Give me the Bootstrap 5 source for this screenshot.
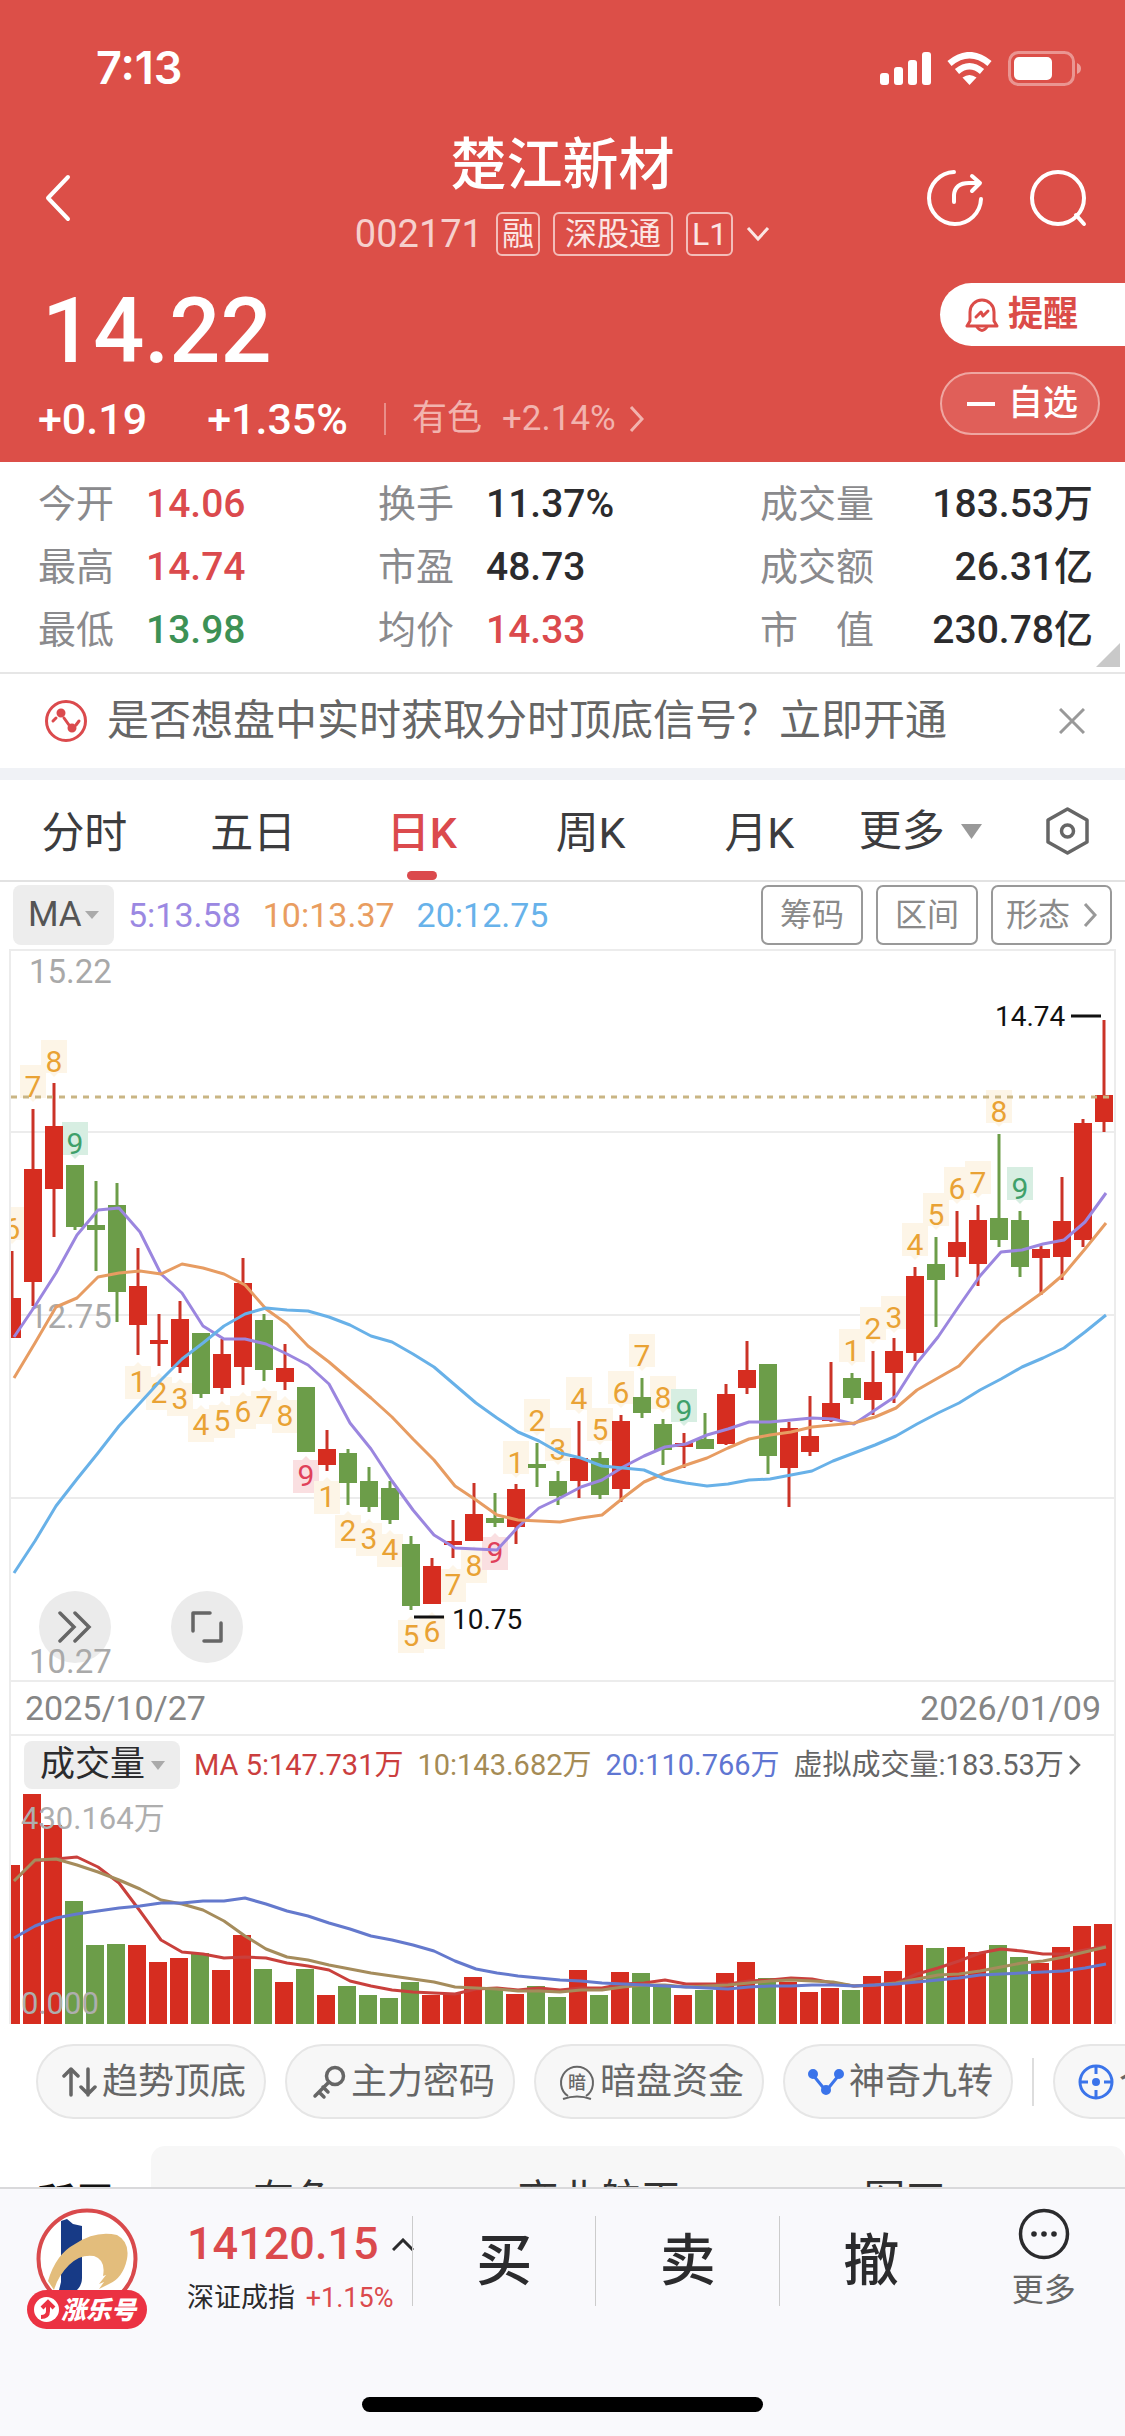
<!DOCTYPE html>
<html lang="zh-CN">
<head>
<meta charset="utf-8">
<meta name="viewport" content="width=device-width, initial-scale=1">
<title>楚江新材 002171</title>
<link href="https://cdn.jsdelivr.net/npm/bootstrap@5.3.0/dist/css/bootstrap.min.css" rel="stylesheet">
<style>
  :root { --up: #db4a4d; --down: #3d9155; --brand: #dc4f48; --rule: #e6e6e6; }
  body { font-family: Roboto, "Noto Sans CJK SC", sans-serif; background: #fff; color: #2b2b2d; }
  button, select { font-family: inherit; }
  svg { display: block; flex: none; }
  .plain { background: none; border: 0; padding: 0; color: inherit; }
  .up { color: var(--up); }
  .down { color: var(--down); }

  .page-main { min-height: 0; }
  .quote-head { background: var(--brand); color: #fff; }
  .status { padding: 43px 42px 40px 96px; font: 600 45px/50px Inter, sans-serif; }
  .status-icons { gap: 16px; }
  .side { flex: 1 1 0; padding: 0 38px; gap: 45px; }
  .back { margin-left: 7px; }
  .stock-name { font-size: 56px; line-height: 64px; font-weight: 500; margin: 0; }
  .stock-code { font-size: 38px; line-height: 58px; margin-top: 8px; gap: 13px; color: #f6d0cd; }
  .flag { border: 2px solid #f3bdb9; border-radius: 6px; font-size: 32px; line-height: 40px; padding: 0 4px; color: #fbe6e4; }
  .flag-wide { padding: 0 10px; }
  .price-area { padding: 20px 0 21px 38px; }
  .price { font-size: 90px; line-height: 98px; font-weight: 500; padding-left: 4px; }
  .change { font-size: 43px; line-height: 44px; font-weight: 500; margin-top: 16px; }
  .change-pct { padding-left: 60px; }
  .sector { font-size: 35px; font-weight: 400; color: #f2b3ae; border-left: 2px solid #e98e89; line-height: 32px; padding-left: 26px; margin-left: 36px; gap: 20px; text-decoration: none; }
  .sector svg { margin-left: -8px; }
  .tool { width: 185px; height: 63px; font-size: 35px; line-height: 60px; gap: 9px; font-weight: 500; }
  .tool-alert { background: #fff; color: #db4c48; border-radius: 32px 0 0 32px; padding-left: 25px; font-weight: 700; }
  .tool-fav { width: 160px; border: 2px solid #efa6a1; border-radius: 32px; background: #e05f59; padding-left: 25px; margin-top: 26px; gap: 13px; }

  .stats { display: grid; grid-template-columns: 340fr 382fr 333fr; padding: 11px 32px 10px 38px; border-bottom: 2px solid var(--rule); font-size: 39px; line-height: 63px; margin: 0; position: relative; }
  .stats dt { font-size: 38px; font-weight: 400; color: #8a8a8d; width: 108px; white-space: nowrap; flex: none; }
  .stats dd { margin: 0; font-weight: 500; white-space: nowrap; }
  .fold { position: absolute; right: 5px; bottom: 5px; }

  .notice { padding: 0 40px 0 45px; gap: 20px; font-size: 42px; line-height: 92px; color: #666; border-bottom: 12px solid #f0f2f6; height: 106px; }
  .periods { border-bottom: 2px solid #e2e2e2; font-size: 43px; line-height: 60px; color: #3c3c3e; }
  .period { width: 15%; padding: 23px 0 17px; }
  .period::after { content: ""; display: block; width: 30px; height: 9px; margin: -9px auto 0; position: relative; top: 17px; border-radius: 5px; }
  .period.active { color: var(--up); font-weight: 500; }
  .period.active::after { background: var(--up); }
  .period-more { width: 25%; padding: 2px 36px 0 15px; }

  .ma-row { padding: 3px 13px 4px 13px; gap: 22px; font-size: 34px; line-height: 60px; }
  .drop { background: #ededed; border-radius: 8px; position: relative; color: #555; }
  .drop select { appearance: none; background: none; border: 0; color: inherit; font-size: 35px; line-height: 48px; }
  .drop svg { position: absolute; right: 15px; top: 50%; margin-top: -4px; pointer-events: none; }
  .drop-ma { margin-right: -8px; }
  .drop-ma select { height: 60px; padding: 0 32px 0 15px; }
  .drop-vol { color: #2b2b2d; }
  .drop-vol select { height: 48px; padding: 0 34px 0 16px; }
  .outlines { gap: 13px; }
  .outline { border: 2px solid #999; border-radius: 7px; color: #8a8a8a; font-size: 32px; line-height: 56px; padding: 0 17px; }
  .outline-arrow { padding: 0 13px; gap: 13px; }

  .plots { margin: 0 9px; border: solid #ececec; border-width: 2px 2px 0; }
  .candles { position: relative; }
  .candles > svg { width: 100%; height: auto; position: relative; pointer-events: none; }
  .round { position: absolute; width: 72px; height: 72px; border-radius: 50%; background: #ebebeb; bottom: 17px; }
  .round-next { left: 28px; }
  .round-full { left: 160px; }
  .dates { border: solid #ececec; border-width: 2px 0; font-size: 34px; line-height: 52px; color: #858585; padding: 0 13px 0 14px; }
  .vol-row { padding: 5px 0 5px 13px; gap: 14px; font-size: 29px; line-height: 48px; white-space: nowrap; }
  .volumes svg { width: 100%; height: auto; }

  .pills { padding: 20px 0 27px 36px; gap: 19px; }
  .pill { height: 75px; border: 2px solid #e6e6e6; border-radius: 38px; background: #f7f7f7; color: #666; font-size: 36px; line-height: 70px; padding: 0 18px 0 23px; gap: 5px; white-space: nowrap; flex: none; }
  .pill-rule { width: 2px; height: 48px; background: #ddd; flex: none; }
  .topics { padding-left: 36px; font-size: 41px; line-height: 60px; color: #333; }
  .topic-own { font-size: 39px; font-weight: 700; color: #111; width: 115px; padding-top: 27px; margin: 0; line-height: 60px; }
  .topic-list { background: #f7f7f7; border-radius: 14px; padding: 24px 179px 0 102px; }

  .dock { background: #f9f9fc; border-top: 2px solid #d9d9db; padding: 19px 0 24px; flex: none; }
  .dock-logo { margin-left: 27px; }
  .dock-index { width: 225px; margin-left: 40px; padding-top: 11px; }
  .index-value { font-size: 45px; line-height: 50px; font-weight: 500; gap: 13px; }
  .index-name { font-size: 27px; line-height: 36px; margin-top: 11px; white-space: nowrap; }
  .trade { flex: 183 1 0; height: 90px; margin-top: 8px; border-left: 1px solid #ccc; font-size: 56px; font-weight: 500; line-height: 90px; }
  .dock-more { flex: 163 1 0; font-size: 32px; color: #666; line-height: 40px; }
  .dock-more span { margin-top: 10px; }
  .home-bar { width: 401px; height: 15px; border-radius: 8px; background: #000; margin: 67px auto 0; }
</style>
</head>
<body>
<div class="vh-100 d-flex flex-column">
<main class="page-main flex-fill overflow-hidden">

  <header class="quote-head">
    <div class="status d-flex justify-content-between align-items-center">
      <span>7:13</span>
      <div class="status-icons d-flex align-items-center">
        <svg width="51" height="33" fill="#fff"><rect y="21" width="9" height="12" rx="3"/><rect x="14" y="15" width="9" height="18" rx="3"/><rect x="28" y="8" width="9" height="25" rx="3"/><rect x="42" y="0" width="9" height="33" rx="3"/></svg>
        <svg width="45" height="33" viewBox="0 0 45 33" fill="none" stroke="#fff" stroke-width="6.5"><path d="M2.500 11.500Q22.500-5 42.500 11.500"/><path d="M10 19.500Q22.500 9 35 19.500"/><path d="M22.500 33l-7-7.500q7-5 14 0z" fill="#fff" stroke="none"/></svg>
        <svg width="75" height="35" viewBox="0 0 75 35"><rect x="1.500" y="1.500" width="64" height="32" rx="9" fill="none" stroke="#fff" stroke-opacity=".4" stroke-width="3"/><rect x="6" y="6" width="38" height="23" rx="5" fill="#fff"/><path d="M69 12q4 1.500 4 5.500t-4 5.500z" fill="#fff" fill-opacity=".45"/></svg>
      </div>
    </div>

    <div class="d-flex align-items-center">
      <div class="side d-flex">
        <button class="plain back" type="button" aria-label="返回"><svg width="26" height="48" fill="none" stroke="#fff" stroke-width="4" stroke-linecap="round" stroke-linejoin="round"><path d="M23 3L3 24l20 21"/></svg></button>
      </div>
      <div class="text-center">
        <h1 class="stock-name">楚江新材</h1>
        <div class="stock-code d-flex align-items-center justify-content-center">
          <span>002171</span><span class="flag">融</span><span class="flag flag-wide">深股通</span><span class="flag">L1</span>
          <svg width="24" height="16" fill="none" stroke="#fbe6e4" stroke-width="3"><path d="M2 2l10 11L22 2"/></svg>
        </div>
      </div>
      <div class="side d-flex justify-content-end">
        <button class="plain" type="button" aria-label="分享"><svg width="58" height="58" viewBox="0 0 58 58" fill="none" stroke="#fff" stroke-width="4" stroke-linecap="round" stroke-linejoin="round"><path d="M28 3a26 26 0 1 0 27 27"/><path d="M28 33v-7q1-12 15-12h9M46 7l8 7-8 8"/></svg></button>
        <button class="plain" type="button" aria-label="搜索"><svg width="58" height="58" viewBox="0 0 58 58" fill="none" stroke="#fff" stroke-width="4" stroke-linecap="round"><circle cx="29" cy="29" r="26"/><path d="M47 46l8 9"/></svg></button>
      </div>
    </div>

    <div class="price-area d-flex justify-content-between">
      <div>
        <div class="price">14.22</div>
        <div class="change d-flex align-items-center">
          <span>+0.19</span><span class="change-pct">+1.35%</span>
          <a class="sector d-flex align-items-center" href="#"><span>有色</span><span>+2.14%</span><svg width="16" height="28" fill="none" stroke="#f2b3ae" stroke-width="3"><path d="M3 2l11 12L3 26"/></svg></a>
        </div>
      </div>
      <div>
        <button class="plain tool tool-alert d-flex align-items-center" type="button"><svg width="34" height="36" viewBox="0 0 34 36" fill="none" stroke="#db4c48" stroke-width="3" stroke-linejoin="round" stroke-linecap="round"><path d="M2 29h30l-3-5V15a12 12 0 0 0-24 0v9z"/><path d="M12 30q5 7 10 0M11 20l5-5 2 4 5-5"/></svg>提醒</button>
        <button class="plain tool tool-fav d-flex align-items-center" type="button"><svg width="28" height="4"><rect width="28" height="4" fill="#fff"/></svg>自选</button>
      </div>
    </div>
  </header>

  <dl class="stats">
    <div class="d-flex"><dt>今开</dt><dd class="up">14.06</dd></div>
    <div class="d-flex"><dt>换手</dt><dd>11.37%</dd></div>
    <div class="d-flex justify-content-between"><dt>成交量</dt><dd>183.53万</dd></div>
    <div class="d-flex"><dt>最高</dt><dd class="up">14.74</dd></div>
    <div class="d-flex"><dt>市盈</dt><dd>48.73</dd></div>
    <div class="d-flex justify-content-between"><dt>成交额</dt><dd>26.31亿</dd></div>
    <div class="d-flex"><dt>最低</dt><dd class="down">13.98</dd></div>
    <div class="d-flex"><dt>均价</dt><dd class="up">14.33</dd></div>
    <div class="d-flex justify-content-between"><dt>市　值</dt><dd>230.78亿</dd></div>
    <svg class="fold" width="24" height="24"><path d="M24 0v24H0z" fill="#c9c9c9"/></svg>
  </dl>

  <div class="notice d-flex align-items-center">
    <svg width="42" height="42" viewBox="0 0 42 42" fill="none" stroke="#db4a4d" stroke-width="3" stroke-linecap="round"><circle cx="21" cy="21" r="19.500"/><path d="M8 21l3-3M19 18l5 7M31 25l3-4"/><circle cx="16" cy="13" r="3" fill="#db4a4d"/><circle cx="27" cy="28" r="3" fill="#db4a4d"/></svg>
    <span class="flex-fill">是否想盘中实时获取分时顶底信号？立即开通</span>
    <button class="plain" type="button" aria-label="关闭"><svg width="26" height="26" stroke="#999" stroke-width="3"><path d="M1 1l24 24M25 1L1 25"/></svg></button>
  </div>

  <nav class="periods d-flex">
    <button class="plain period" type="button">分时</button>
    <button class="plain period" type="button">五日</button>
    <button class="plain period active" type="button">日K</button>
    <button class="plain period" type="button">周K</button>
    <button class="plain period" type="button">月K</button>
    <div class="period-more d-flex align-items-center justify-content-between">
      <button class="plain d-flex align-items-center gap-3" type="button">更多<svg width="21" height="15"><path d="M0 0h21L10.500 15z" fill="#999"/></svg></button>
      <button class="plain" type="button" aria-label="设置"><svg width="43" height="48" viewBox="0 0 43 48" fill="none" stroke="#666" stroke-width="3.500" stroke-linejoin="round"><path d="M21.500 2L41 13v22L21.500 46 2 35V13z"/><circle cx="21.500" cy="24" r="6"/></svg></button>
    </div>
  </nav>

  <div class="ma-row d-flex align-items-center">
    <label class="drop drop-ma d-flex"><select aria-label="主图指标"><option>MA</option></select><svg width="14" height="8"><path d="M0 0h14L7 8z" fill="#aaa"/></svg></label>
    <span style="color:#9b88e2">5:13.58</span>
    <span style="color:#e99d60">10:13.37</span>
    <span style="color:#67b2ea">20:12.75</span>
    <div class="outlines d-flex ms-auto">
      <button class="plain outline" type="button">筹码</button>
      <button class="plain outline" type="button">区间</button>
      <button class="plain outline outline-arrow d-flex align-items-center" type="button">形态<svg width="14" height="26" fill="none" stroke="#999" stroke-width="3"><path d="M2 2l10 11L2 24"/></svg></button>
    </div>
  </div>

  <section class="plots">
    <div class="candles">
      <button class="plain round round-next d-flex align-items-center justify-content-center" type="button" aria-label="快进"><svg width="34" height="34" fill="none" stroke="#666" stroke-width="3.500" stroke-linecap="round"><path d="M2 3l14 14L2 31M17 3l14 14-14 14"/></svg></button>
      <button class="plain round round-full d-flex align-items-center justify-content-center" type="button" aria-label="全屏"><svg width="34" height="34" fill="none" stroke="#666" stroke-width="3.500" stroke-linecap="round" stroke-linejoin="round"><path d="M20 3H3v18M31 13v18H14"/></svg></button>
      <svg id="kline" viewBox="11 950 1103 729" font-family="Roboto, sans-serif"></svg>
    </div>
    <div class="dates d-flex justify-content-between"><span>2025/10/27</span><span>2026/01/09</span></div>
    <div class="vol-row d-flex align-items-center">
      <label class="drop drop-vol d-flex"><select aria-label="副图指标"><option>成交量</option></select><svg width="14" height="9"><path d="M0 0h14L7 9z" fill="#aaa"/></svg></label>
      <span style="color:#cb3e3e">MA 5:147.731万</span>
      <span style="color:#a58b55">10:143.682万</span>
      <span style="color:#5f76d2">20:110.766万</span>
      <a class="d-flex align-items-center gap-1 text-decoration-none" style="color:#666" href="#">虚拟成交量:183.53万<svg width="13" height="22" fill="none" stroke="#666" stroke-width="2.500"><path d="M2 2l9 9-9 9"/></svg></a>
    </div>
    <div class="volumes"><svg id="volume" viewBox="11 1793 1103 230" font-family="Roboto, 'Noto Sans CJK SC', sans-serif"></svg></div>
  </section>

  <div class="pills d-flex align-items-center overflow-hidden">
    <button class="plain pill d-flex align-items-center" type="button"><svg width="36" height="32" fill="none" stroke="#666" stroke-width="3.500" stroke-linecap="round" stroke-linejoin="round"><path d="M10 29V3M3 10l7-7 7 7M27 3v26M20 21l7 7 7-7"/></svg>趋势顶底</button>
    <button class="plain pill d-flex align-items-center" type="button"><svg width="36" height="36" fill="none" stroke="#666" stroke-width="3.500" stroke-linecap="round"><circle cx="25" cy="12" r="8.500"/><path d="M19 18L5 32M9 28l5 5M13 23l5 5"/></svg>主力密码</button>
    <button class="plain pill d-flex align-items-center" type="button"><svg width="36" height="36" fill="none" stroke="#666" stroke-width="2"><path d="M9 32a16 16 0 1 1 18 0M4 35q14-5 28 0"/><text x="18" y="25" font-size="18" font-weight="500" fill="#666" stroke="none" text-anchor="middle">暗</text></svg>暗盘资金</button>
    <button class="plain pill d-flex align-items-center" type="button"><svg width="36" height="30" stroke="#3b74ea" stroke-width="3" fill="#3b74ea"><path d="M5 8l13 16L31 8" fill="none"/><circle cx="5" cy="7" r="3.500"/><circle cx="31" cy="7" r="3.500"/><circle cx="18" cy="23" r="3.500"/></svg>神奇九转</button>
    <span class="pill-rule"></span>
    <button class="plain pill d-flex align-items-center" type="button"><svg width="36" height="36" stroke="#3b74ea" stroke-width="3" fill="none"><circle cx="18" cy="18" r="16"/><path d="M18 2v8M18 26v8M2 18h8M26 18h8"/><circle cx="18" cy="18" r="2.500" fill="#3b74ea"/></svg>个股</button>
  </div>

  <div class="topics d-flex">
    <h2 class="topic-own">所属</h2>
    <div class="topic-list flex-fill d-flex justify-content-between"><span>有色</span><span>商业航天</span><span>军工</span></div>
  </div>
</main>

<footer class="dock">
  <div class="d-flex align-items-start">
    <svg class="dock-logo" width="120" height="122" viewBox="27 2210 120 122">
      <circle cx="87" cy="2261" r="48.500" fill="#fff" stroke="#d94a4c" stroke-width="4"/>
      <path d="M61 2223l6-2 6 5 9 2v52q0 7-5 12H59l2-8z" fill="#173a86"/>
      <path d="M48 2283Q56 2256 75 2246Q96 2232 117 2237Q130 2244 127 2261Q123 2280 109 2286l-10 5 5-7-5 2 7-9-3 1Q106 2262 94 2258Q80 2256 69 2267Q58 2278 54 2292z" fill="#e3bd7c"/>
      <rect x="27" y="2292" width="120" height="39" rx="19.500" fill="#eb3242"/>
      <circle cx="46.500" cy="2311.500" r="12.500" fill="#fff"/>
      <path d="M41 2319q7 0 7-6v-7M42 2310l6-6 6 6" fill="none" stroke="#eb3242" stroke-width="4"/>
      <text x="61" y="2321" font-size="25" font-weight="900" font-style="italic" fill="#fff">涨乐号</text>
    </svg>
    <div class="dock-index">
      <div class="index-value up d-flex align-items-center">14120.15<svg width="22" height="13" fill="none" stroke="#2b2b2d" stroke-width="3"><path d="M1 12L11 2l10 10"/></svg></div>
      <div class="index-name">深证成指 <span class="up ps-1">+1.15%</span></div>
    </div>
    <button class="plain trade" type="button">买</button>
    <button class="plain trade" type="button">卖</button>
    <button class="plain trade" type="button">撤</button>
    <button class="plain dock-more d-flex flex-column align-items-center" type="button">
      <svg width="52" height="52" fill="none" stroke="#2b2b2d" stroke-width="3.500"><circle cx="26" cy="26" r="23.500"/><g fill="#2b2b2d" stroke="none"><circle cx="16" cy="26" r="2.800"/><circle cx="26" cy="26" r="2.800"/><circle cx="36" cy="26" r="2.800"/></g></svg>
      <span>更多</span>
    </button>
  </div>
  <div class="home-bar"></div>
</footer>
</div>

<script>
const RED = '#d62d20', GREEN = '#6c9d49';
// colour, high, body top, body bottom, low, volume bar top
const days = `r 1250 1297 1337 1337 1864;r 1108 1168 1281 1305 1793;r 1082 1125 1188 1236 1824;g 1164 1164 1226 1229 1900
g 1180 1224 1229 1270 1944;g 1182 1204 1291 1321 1943;r 1247 1285 1324 1354 1944;r 1313 1339 1343 1365 1961
r 1300 1318 1366 1372 1957;g 1332 1332 1393 1397 1952;r 1338 1353 1387 1393 1969;r 1257 1282 1366 1384 1934
g 1313 1319 1369 1380 1968;r 1343 1367 1381 1389 1981;g 1386 1386 1451 1451 1968;r 1429 1448 1464 1470 1994
g 1448 1452 1482 1504 1985;g 1466 1480 1506 1511 1994;g 1480 1487 1519 1523 1997;g 1535 1543 1605 1609 1981
r 1557 1565 1603 1603 1994;r 1519 1540 1544 1557 1993;r 1482 1513 1540 1540 1976;g 1492 1517 1522 1526 1989
r 1483 1488 1526 1543 1993;g 1442 1463 1467 1486 1985;g 1470 1480 1495 1504 1996;r 1420 1457 1480 1497 1969
g 1451 1457 1494 1498 1994;r 1414 1420 1488 1501 1971;g 1377 1396 1412 1417 1972;g 1418 1423 1449 1464 1985
r 1432 1442 1446 1467 1994;g 1412 1438 1448 1448 1989;r 1383 1393 1443 1444 1972;r 1340 1369 1387 1393 1961
g 1363 1363 1455 1473 1977;r 1421 1427 1467 1506 1981;r 1395 1435 1451 1455 1991;r 1361 1402 1420 1421 1987
g 1372 1377 1397 1403 1989;r 1350 1381 1399 1414 1975;r 1337 1350 1372 1402 1970;r 1266 1275 1352 1360 1944
g 1236 1263 1279 1326 1947;r 1210 1241 1256 1276 1946;r 1204 1219 1263 1285 1951;g 1133 1217 1239 1246 1944
g 1210 1219 1266 1276 1956;r 1245 1248 1257 1294 1962;r 1176 1220 1256 1279 1946;r 1118 1122 1239 1246 1925
r 1019 1094 1121 1131 1923`.split(/[;\n]/).map(s => s.split(' ').map((v, i) => i ? +v : v));
const nums = s => s.split(' ').map(Number);
const ma5 = nums('1336 1305 1272 1234 1209 1207 1231 1273 1292 1325 1338 1338 1343 1353 1364 1383 1422 1448 1480 1509 1534 1547 1548 1549 1526 1507 1497 1486 1479 1466 1455 1446 1443 1434 1428 1421 1421 1419 1417 1418 1423 1409 1395 1362 1336 1305 1275 1251 1249 1243 1239 1221 1192');
const ma10 = nums('1377 1342 1306 1297 1276 1272 1270 1273 1263 1267 1273 1284 1308 1323 1345 1361 1379 1397 1416 1438 1459 1485 1499 1514 1519 1520 1521 1517 1514 1497 1481 1472 1464 1457 1447 1438 1434 1431 1426 1424 1422 1416 1407 1389 1377 1365 1342 1321 1306 1291 1273 1248 1222');
const ma20 = nums('1572 1540 1505 1478 1452 1425 1402 1379 1358 1342 1325 1313 1307 1309 1310 1316 1324 1335 1341 1353 1366 1384 1402 1417 1431 1440 1452 1457 1465 1467 1469 1478 1482 1485 1483 1479 1478 1474 1470 1460 1452 1444 1435 1423 1412 1402 1389 1378 1366 1357 1347 1331 1314');
const vma5 = nums('1880 1860 1858 1856 1866 1882 1910 1939 1951 1953 1957 1956 1957 1962 1965 1969 1980 1985 1989 1991 1992 1993 1988 1987 1989 1987 1989 1987 1987 1983 1982 1979 1983 1983 1983 1980 1979 1977 1978 1982 1985 1984 1982 1973 1967 1960 1952 1948 1950 1953 1953 1949 1945');
const vma10 = nums('1880 1859 1858 1864 1871 1879 1888 1899 1903 1909 1920 1935 1948 1956 1959 1964 1968 1972 1975 1978 1981 1986 1987 1988 1990 1990 1991 1989 1989 1986 1984 1984 1986 1985 1984 1982 1980 1979 1980 1981 1985 1984 1982 1978 1974 1973 1970 1966 1962 1960 1956 1951 1946');
const vma20 = nums('1937 1925 1917 1913 1910 1907 1905 1902 1902 1900 1900 1897 1903 1910 1915 1922 1928 1935 1939 1944 1950 1960 1968 1972 1975 1977 1979 1980 1982 1983 1984 1985 1986 1987 1988 1986 1985 1985 1984 1984 1985 1984 1983 1981 1979 1977 1974 1973 1972 1971 1970 1967 1963');
// nine-turn counts: day index, digit, digit centre, side of the candle (a above, b below)
const turns = `0 6 1227 a;1 7 1085 a;2 8 1060 a;3 9 1142 a;6 1 1380 b;7 2 1391 b;8 3 1397 b;9 4 1423 b;10 5 1419 b;11 6 1410 b;12 7 1405 b;13 8 1414 b;14 9 1474 b
15 1 1495 b;16 2 1529 b;17 3 1537 b;18 4 1548 b;19 5 1634 b;20 6 1630 b;21 7 1583 b;22 8 1564 b;23 9 1551 b;24 1 1461 a;25 2 1419 a;26 3 1448 a;27 4 1397 a;28 5 1428 a;29 6 1391 a;30 7 1354 a;31 8 1396 a;32 9 1409 a
40 1 1349 a;41 2 1327 a;42 3 1316 a;43 4 1243 a;44 5 1213 a;45 6 1187 a;46 7 1181 a;47 8 1110 a;48 9 1187 a`.split(/[;\n]/).map(s => s.split(' '));
const line = (ys, c, w = 3) => `<polyline fill="none" stroke="${c}" stroke-width="${w}" stroke-linejoin="round" points="${ys.map((y, i) => (14 + 21 * i) + ',' + y).join(' ')}"/>`;

let k = '';
for (const y of [1131, 1314, 1497]) k += `<path d="M11 ${y}H1114" stroke="#ececec" stroke-width="2"/>`;
let digits = '';
for (const [i, d, y, side] of turns) {
  const x = 12 + 21 * i, nine = d === '9';
  const bg = nine ? (side === 'a' ? '#d7eee2' : '#fadfe1') : '#fdf5e7';
  const fg = nine ? (side === 'a' ? '#3fa06a' : '#e0405a') : '#e9a234';
  const top = side === 'a' ? y - 21 : y - 15;
  const tip = side === 'a' ? `M${x - 4} ${top + 33}h8l-4 4z` : `M${x - 4} ${top}h8l-4-4z`;
  k += `<rect x="${x - 13}" y="${top}" width="26" height="33" fill="${bg}"/><path d="${tip}" fill="${bg}"/>`;
  digits += `<text x="${x}" y="${+y + 11}" font-size="30" text-anchor="middle" fill="${fg}">${d}</text>`;
}
days.forEach(([c, h, t, b, l], i) => {
  const x = 12 + 21 * i;
  k += `<path d="M${x} ${h}V${l}" stroke="${c === 'r' ? '#cb3327' : '#6c9d49'}" stroke-width="3"/><rect x="${x - 9}" y="${t}" width="18" height="${b - t}" fill="${c === 'r' ? RED : GREEN}"/>`;
});
k += digits + '<path d="M11 1096H1114" stroke="#c9b584" stroke-width="3" stroke-dasharray="6 6"/>';
k += '<g font-size="33" fill="#a9a9a9"><text x="29" y="982">15.22</text><text x="29" y="1327">12.75</text><text x="29" y="1672">10.27</text></g>';
k += line(ma5, '#9b86df') + line(ma10, '#e79c62') + line(ma20, '#68b1e8');
k += '<g font-size="28" fill="#111"><text x="995" y="1025">14.74</text><text x="452" y="1628">10.75</text></g><path d="M1071 1015H1101M414 1616H444" stroke="#111" stroke-width="3"/>';
document.getElementById('kline').innerHTML = k;

let v = '';
days.forEach((d, i) => { v += `<rect x="${2 + 21 * i}" y="${d[5]}" width="18" height="${2023 - d[5]}" fill="${d[0] === 'r' ? RED : GREEN}"/>`; });
v += '<g font-size="31" fill="#aeaeae"><text x="21" y="1828">430.164万</text><text x="21" y="2013">0.000</text></g>';
v += line(vma5, '#c9403c') + line(vma10, '#a58c5c') + line(vma20, '#6479cd');
document.getElementById('volume').innerHTML = v;
</script>
<script src="https://cdn.jsdelivr.net/npm/bootstrap@5.3.0/dist/js/bootstrap.bundle.min.js"></script>
</body>
</html>
